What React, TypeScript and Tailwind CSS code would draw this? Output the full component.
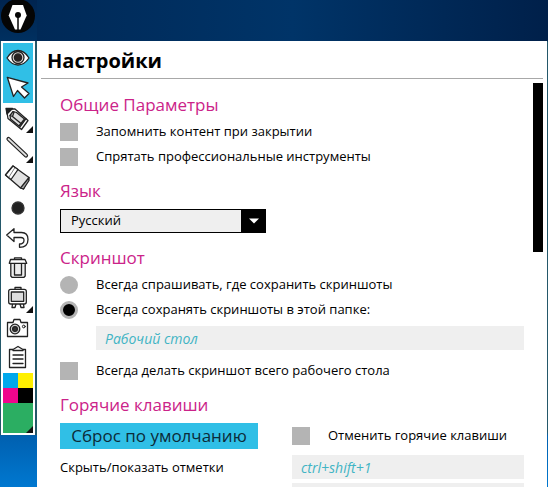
import { useState } from "react";
import type { ComponentProps, ReactNode } from "react";

type Tool = {
  label: string;
  active?: boolean;
  more?: boolean;
  icon: ReactNode;
};

const tools: Tool[] = [
  {
    label: "Показать",
    active: true,
    icon: (
      <>
        <path d="M4 15C7 10 11 7.500 15 7.500S23 10 26 15C23 19.500 19 22 15 22S7 19.500 4 15Z" fill="#fff" />
        <circle cx="15" cy="14.500" r="6" fill="#d8d0cc" />
        <circle cx="15" cy="14.500" r="3.600" fill="#2a2220" />
      </>
    ),
  },
  {
    label: "Курсор",
    active: true,
    icon: <path d="M4.300 4.300L25 10L18.500 14L26 20.500L21.500 25L14.500 17.500L10.500 23.500Z" fill="#fff" />,
  },
  {
    label: "Маркер",
    more: true,
    icon: (
      <>
        <path d="M3.500 6L12 6L25 17.500L18.500 26.500L5 15.500Z" fill="#fff" />
        <path d="M3 5.500H9.500L4 11Z" fill="#222" />
        <path d="M10 8.500L13.500 9.500L21.500 16L16 23L7.500 16L7 12.500Z" fill="#ddd" />
        <path d="M11 9L9.500 13.500L18 20.500M23 15.500L16.500 24.500M9.500 13.500L7 12.500" />
      </>
    ),
  },
  {
    label: "Линия",
    more: true,
    icon: (
      <>
        <path d="M5.500 6L23 22.500" strokeWidth="4.200" />
        <path d="M5.500 6L23 22.500" stroke="#ddd" strokeWidth="1.800" />
      </>
    ),
  },
  {
    label: "Ластик",
    icon: (
      <>
        <path d="M10 3L26 14.500L20.500 26L17.500 25L2.500 12Z" fill="#e2e2e2" />
        <path d="M10 3L15 6.500L8 16.500L2.500 12Z" fill="#fff" />
        <path d="M26 14.500L26 17.500L20.500 26L17.500 25Z" fill="#aaa" />
        <path d="M12 4.500L6 14" strokeWidth="0.600" />
      </>
    ),
  },
  { label: "Точка", icon: <circle cx="15" cy="15" r="6" fill="#222" stroke="#333" /> },
  {
    label: "Отменить",
    icon: (
      <path
        d="M3.700 12L11 5.700V9.500H18.500C22.500 9.500 25 12 25 16.500C25 21.500 22 24.300 16.500 24.300V21C19.500 21 21 19.500 21 17.200C21 15.300 20 14.500 18 14.500H11V18.500Z"
        fill="#fff"
      />
    ),
  },
  {
    label: "Очистить",
    icon: (
      <>
        <path d="M11.500 6.500V4.800H18.500V6.500" />
        <path d="M7.800 10H22.200V23L21 24.300H9L7.800 23Z" fill="#eee" />
        <path d="M7.500 6.500H22L23.700 10.300H6.300Z" fill="#fff" />
        <path d="M11.500 11V22M18.500 11V22M11.500 22H18.500" />
      </>
    ),
  },
  {
    label: "Доска",
    more: true,
    icon: (
      <>
        <path d="M12 6V4.500H18V6M9.500 21L9 24.500H12L13 21M17 21L18 24.500H21L20.500 21" fill="#fff" />
        <rect x="5.700" y="6.300" width="17.600" height="14.700" rx="2" fill="#fff" />
        <rect x="8.300" y="9" width="12.400" height="9.300" fill="#ddd" />
      </>
    ),
  },
  {
    label: "Камера",
    icon: (
      <>
        <path d="M4.500 9.500H10L11 6.500H17L18 9.500H24.500V23.500H4.500Z" fill="#fff" />
        <circle cx="12" cy="16" r="4.800" fill="#ccc" />
        <circle cx="12" cy="16" r="2.400" fill="#333" />
        <circle cx="20.800" cy="13.500" r="1.400" strokeWidth="1" />
      </>
    ),
  },
  {
    label: "Буфер",
    icon: (
      <>
        <path d="M7.500 6.500H10L15 3.500L20 6.500H22.500V24.500H6.500V6.500Z" fill="#fff" />
        <path d="M10 7.500H20M10 12H20M10 16H20M10 20.500H20" />
      </>
    ),
  },
];

function Corner() {
  return (
    <svg viewBox="0 0 7 7" className="absolute right-0 bottom-0 h-[7px] w-[7px]">
      <path d="M7 0V7H0Z" fill="#111" />
    </svg>
  );
}

function Toolbar() {
  return (
    <aside className="flex w-[37px] shrink-0 flex-col">
      <svg viewBox="0 0 37 41" className="h-[41px] w-[37px]">
        <circle cx="18" cy="16" r="17" fill="#050505" />
        <path d="M12.500 5H23L26.700 15.500L20.500 29.500H15L8.700 15.500Z" fill="#fff" />
        <path d="M18 16V30" stroke="#050505" strokeWidth="1.500" />
        <circle cx="18" cy="15" r="3" fill="#050505" />
      </svg>
      <div className="border-r-2 border-l border-[#24586a] bg-white p-[2px]">
        {tools.map((tool) => (
          <button
            key={tool.label}
            aria-label={tool.label}
            className={`relative block h-[30px] w-full ${tool.active ? "bg-[#30bfe6]" : "bg-white"}`}
          >
            <svg
              viewBox="0 0 30 30"
              className="h-[30px] w-[30px]"
              fill="none"
              stroke="#222"
              strokeWidth="1.300"
              strokeLinecap="round"
              strokeLinejoin="round"
            >
              {tool.icon}
            </svg>
            {tool.more && <Corner />}
          </button>
        ))}
        <div className="grid grid-cols-2">
          <button aria-label="Голубой" className="h-[15px] bg-[#00a8ec]" />
          <button aria-label="Жёлтый" className="h-[15px] bg-[#fff000]" />
          <button aria-label="Розовый" className="h-[15px] bg-[#f0058c]" />
          <button aria-label="Чёрный" className="h-[15px] bg-black" />
        </div>
        <button aria-label="Зелёный" className="relative block h-[30px] w-full bg-[#2bae62]">
          <Corner />
        </button>
      </div>
    </aside>
  );
}

function Heading({ children }: { children: ReactNode }) {
  return <h2 className="text-[17px] leading-7 text-[#cb2389]">{children}</h2>;
}

function Check({ children, ...props }: ComponentProps<"input">) {
  return (
    <label className="flex h-[25px] items-center gap-[18px]">
      <input type="checkbox" className="h-[18px] w-[18px] shrink-0 appearance-none bg-[#b4b4b4] checked:bg-black" {...props} />
      <span className="whitespace-nowrap">{children}</span>
    </label>
  );
}

function Radio({ children, ...props }: ComponentProps<"input">) {
  return (
    <label className="flex h-[25px] items-center gap-[18px]">
      <input
        type="radio"
        className="h-[18px] w-[18px] shrink-0 appearance-none rounded-full border-3 border-[#b4b4b4] bg-[#b4b4b4] checked:bg-black"
        {...props}
      />
      <span className="whitespace-nowrap">{children}</span>
    </label>
  );
}

export default function App() {
  const [target, setTarget] = useState("folder");

  return (
    <div className="flex h-screen overflow-hidden bg-[linear-gradient(to_bottom,#002450_0px,#003060_41px,#24586a_42px,#24586a_432px,#0060b0_436px,#0078d0_100%)] font-['Open_Sans','Noto_Sans',sans-serif] text-[13px] text-black">
      <Toolbar />
      <div className="flex min-w-0 flex-1 flex-col">
        <div className="h-[41px] shrink-0 bg-linear-to-r from-[#002957] via-[#003468] to-[#00204a]" />
        <main className="mr-px flex min-h-0 flex-1 flex-col bg-white px-1">
          <h1 className="border-b border-[#a8a8a8] px-[6px] pt-[6px] pb-[3px] text-xl leading-7 font-bold">Настройки</h1>
          <div className="flex min-h-0 flex-1 pt-1">
            <form className="min-w-0 flex-1 overflow-hidden pt-2 pr-[9px] pl-[19px]">
              <section>
                <Heading>Общие Параметры</Heading>
                <Check>Запомнить контент при закрытии</Check>
                <Check>Спрятать профессиональные инструменты</Check>
              </section>

              <section className="pt-2">
                <Heading>
                  <label htmlFor="language">Язык</label>
                </Heading>
                <div className="relative mt-1 w-[206px]">
                  <select id="language" className="block h-6 w-full appearance-none border border-black bg-[#efefef] px-[10px]">
                    <option>Русский</option>
                  </select>
                  <span className="pointer-events-none absolute inset-y-0 right-0 flex w-[25px] items-center justify-center bg-black">
                    <svg viewBox="0 0 10 6" className="h-[6px] w-[10px]">
                      <path d="M0 0.500H10L5 5.500Z" fill="#fff" />
                    </svg>
                  </span>
                </div>
              </section>

              <section className="pt-[11px]">
                <Heading>Скриншот</Heading>
                <Radio name="target" checked={target === "ask"} onChange={() => setTarget("ask")}>
                  Всегда спрашивать, где сохранить скриншоты
                </Radio>
                <Radio name="target" checked={target === "folder"} onChange={() => setTarget("folder")}>
                  Всегда сохранять скриншоты в этой папке:
                </Radio>
                <div className="pt-1 pb-2 pl-9">
                  <input
                    aria-label="Папка для скриншотов"
                    defaultValue="Рабочий стол"
                    className="block h-6 w-full bg-[#efefef] px-[9px] text-sm text-[#41b4c4] italic"
                  />
                </div>
                <Check>Всегда делать скриншот всего рабочего стола</Check>
              </section>

              <section className="pt-2">
                <Heading>Горячие клавиши</Heading>
                <div className="grid grid-cols-2 gap-y-[6px] pt-1">
                  <button type="button" className="h-[26px] w-[198px] bg-[#30bfe6] text-[17px] leading-6 whitespace-nowrap text-[#0c2b38]">
                    Сброс по умолчанию
                  </button>
                  <Check>Отменить горячие клавиши</Check>
                  <label htmlFor="toggle-key" className="leading-6 whitespace-nowrap">
                    Скрыть/показать отметки
                  </label>
                  <div className="flex flex-col gap-1">
                    <input
                      id="toggle-key"
                      defaultValue="ctrl+shift+1"
                      className="block h-6 w-full bg-[#efefef] px-[9px] text-sm text-[#41b4c4] italic"
                    />
                    <input aria-label="Следующая клавиша" className="block h-6 w-full bg-[#efefef] px-[9px]" />
                  </div>
                </div>
              </section>
            </form>
            <div className="h-[169px] w-[10px] shrink-0 bg-black" />
          </div>
        </main>
      </div>
    </div>
  );
}
